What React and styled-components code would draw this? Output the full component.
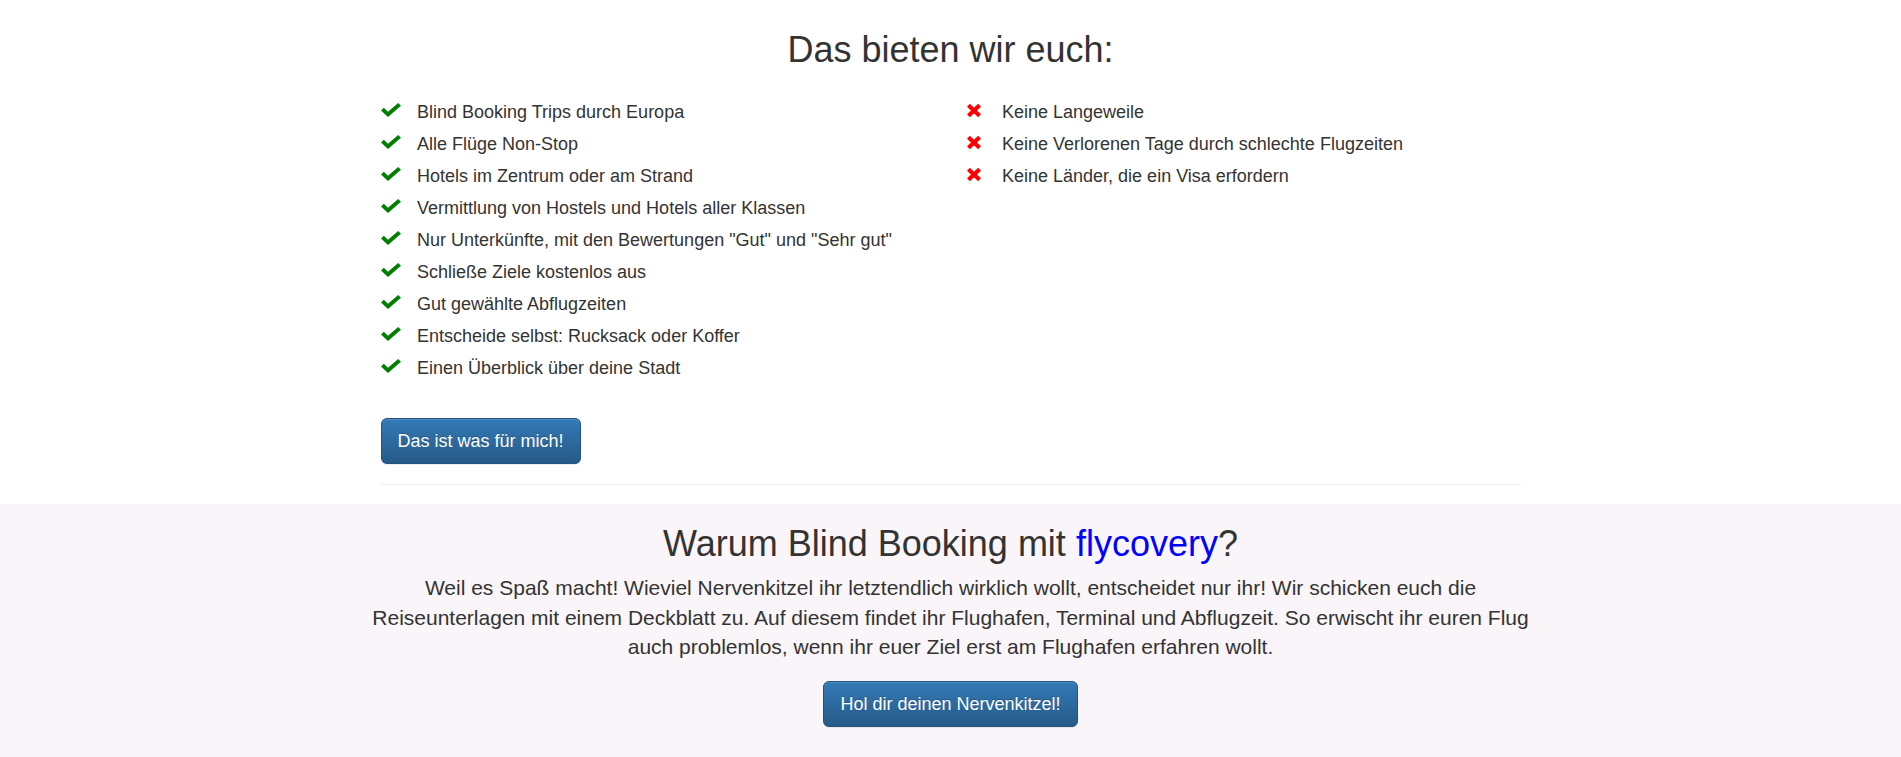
import styled, { createGlobalStyle } from "styled-components";

const GlobalStyle = createGlobalStyle`
  body {
    margin: 0;
    font-family: "Liberation Sans", Arial, Helvetica, sans-serif;
    font-size: 14px;
    color: #333;
    background: #fff;
  }
`;

const pros = [
  "Blind Booking Trips durch Europa",
  "Alle Flüge Non-Stop",
  "Hotels im Zentrum oder am Strand",
  "Vermittlung von Hostels und Hotels aller Klassen",
  'Nur Unterkünfte, mit den Bewertungen "Gut" und "Sehr gut"',
  "Schließe Ziele kostenlos aus",
  "Gut gewählte Abflugzeiten",
  "Entscheide selbst: Rucksack oder Koffer",
  "Einen Überblick über deine Stadt",
];

const cons = [
  "Keine Langeweile",
  "Keine Verlorenen Tage durch schlechte Flugzeiten",
  "Keine Länder, die ein Visa erfordern",
];

const CheckIcon = () => (
  <svg width="20" height="14" viewBox="0 0 20 14">
    <polygon
      points="0,7.6 2.8,4.8 7,8.8 17.2,0 20,2.8 7,14"
      fill="#008000"
    />
  </svg>
);

const CrossIcon = () => (
  <svg width="14" height="13" viewBox="0 0 14 13">
    <path
      d="M1.4 1.3 L12.6 11.7 M12.6 1.3 L1.4 11.7"
      stroke="#ff0000"
      strokeWidth="4.2"
    />
  </svg>
);

const App = () => {
  return (
    <>
      <GlobalStyle />
      <OfferSection>
        <Container>
          <Title>Das bieten wir euch:</Title>
          <Columns>
            <List>
              {pros.map((item) => (
                <Item key={item}>
                  <IconBox $shift={0}>
                    <CheckIcon />
                  </IconBox>
                  {item}
                </Item>
              ))}
            </List>
            <List>
              {cons.map((item) => (
                <Item key={item}>
                  <IconBox $shift={1}>
                    <CrossIcon />
                  </IconBox>
                  {item}
                </Item>
              ))}
            </List>
          </Columns>
          <Actions>
            <Button>Das ist was für mich!</Button>
          </Actions>
          <Divider />
        </Container>
      </OfferSection>

      <WhySection>
        <WideContainer>
          <Title>
            Warum Blind Booking mit <Brand>flycovery</Brand>?
          </Title>
          <Lead>
            Weil es Spaß macht! Wieviel Nervenkitzel ihr letztendlich wirklich
            wollt, entscheidet nur ihr! Wir schicken euch die Reiseunterlagen
            mit einem Deckblatt zu. Auf diesem findet ihr Flughafen, Terminal
            und Abflugzeit. So erwischt ihr euren Flug auch problemlos, wenn ihr
            euer Ziel erst am Flughafen erfahren wollt.
          </Lead>
          <Button>Hol dir deinen Nervenkitzel!</Button>
        </WideContainer>
      </WhySection>
    </>
  );
};

export default App;

const OfferSection = styled.section`
  padding-top: 11px;
  padding-bottom: 20px;
  background: #fff;
`;

const Container = styled.div`
  width: 1170px;
  box-sizing: border-box;
  margin: 0 auto;
  padding: 0 15px;
`;

const WideContainer = styled.div`
  width: 1170px;
  margin: 0 auto;
  text-align: center;
`;

const Title = styled.h1`
  margin: 19px 0 10px;
  font-size: 36px;
  font-weight: 500;
  line-height: 1.1;
  text-align: center;
  color: #333;
`;

const Columns = styled.div`
  display: grid;
  grid-template-columns: 1fr 1fr;
  column-gap: 30px;
  margin-top: 26px;
`;

const List = styled.ul`
  list-style: none;
  margin: 0;
  padding: 0;
`;

const Item = styled.li`
  display: flex;
  align-items: center;
  height: 32px;
  font-size: 18px;
  line-height: 32px;
  color: #333;
  white-space: nowrap;
`;

const IconBox = styled.span`
  display: flex;
  align-items: center;
  flex: 0 0 ${(p) => 36.5 - p.$shift}px;
  padding-left: ${(p) => p.$shift}px;
  height: 32px;

  svg {
    margin-bottom: 3px;
  }
`;

const Actions = styled.div`
  margin-top: 34px;
`;

const Button = styled.button`
  display: inline-block;
  padding: 10px 16px;
  font-family: inherit;
  font-size: 18px;
  line-height: 1.3333333;
  color: #fff;
  border: 1px solid #245580;
  border-radius: 6px;
  background-color: #265a88;
  background-image: linear-gradient(to bottom, #337ab7 0, #265a88 100%);
  text-shadow: 0 -1px 0 rgba(0, 0, 0, 0.2);
  box-shadow: inset 0 1px 0 rgba(255, 255, 255, 0.15),
    0 1px 1px rgba(0, 0, 0, 0.075);
  cursor: pointer;

  &:hover {
    background-position: 0 -15px;
  }
`;

const Divider = styled.hr`
  margin: 20px 0 0;
  border: 0;
  border-top: 1px solid #eee;
`;

const WhySection = styled.section`
  background: #f9f5f8;
  padding: 1px 0 40px;
  margin-top: -1px;
`;

const Brand = styled.span`
  color: #0000ff;
`;

const Lead = styled.p`
  margin: 0 0 20px;
  font-size: 21px;
  line-height: 1.4;
  font-weight: 300;
  color: #333;
`;
